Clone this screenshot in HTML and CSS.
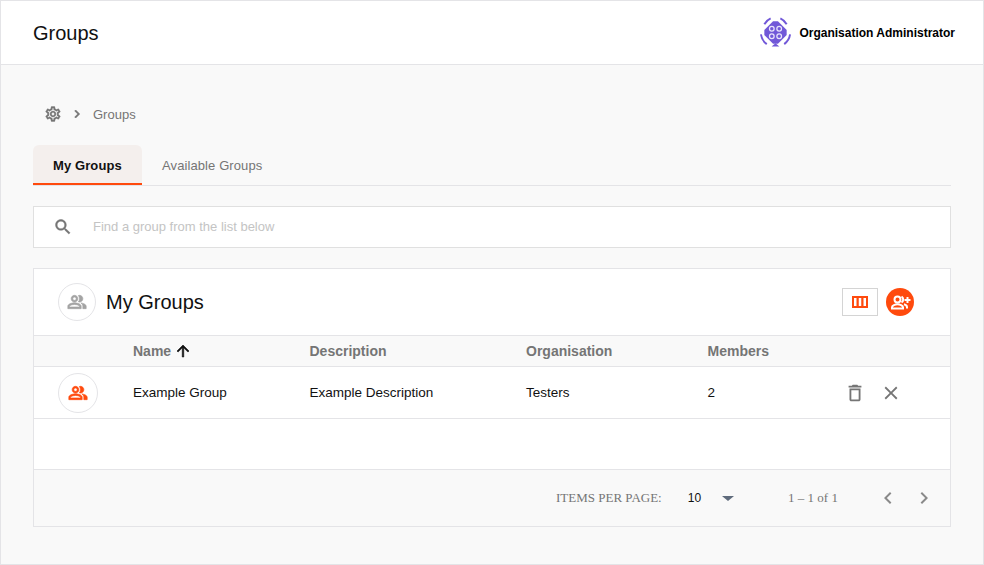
FILE: index.html
```html
<!DOCTYPE html>
<html>
<head>
<title>Groups</title>
<link rel="stylesheet" href="styles.css">
</head>
<body>

<div class="app">
  <header class="topbar">
    <h1 class="page-title">Groups</h1>
    <div class="user">
      <svg class="logo" viewBox="0 0 34 34" width="33" height="33">
        <g fill="none" stroke="#7158d8" stroke-width="2">
          <path d="M5.500 8.500 A14.500 14.500 0 0 1 12 2.500"/>
          <path d="M22 2.500 A14.500 14.500 0 0 1 28.500 8.500"/>
          <path d="M32 19 A15 15 0 0 1 26 29"/>
          <path d="M8 29 A15 15 0 0 1 2 19"/>
        </g>
        <path d="M17 28 L21 31.500 H13 Z" fill="#7158d8"/>
        <path d="M14.500 5.500 H19.500 L28.500 14.500 V19.500 L19.500 28.500 H14.500 L5.500 19.500 V14.500 Z" fill="#7158d8"/>
        <g fill="#7158d8" stroke="#e9e4fb" stroke-width="1.300">
          <circle cx="13.200" cy="13.200" r="2.400"/>
          <circle cx="20.800" cy="13.200" r="2.400"/>
          <circle cx="13.200" cy="20.800" r="2.400"/>
          <circle cx="20.800" cy="20.800" r="2.400"/>
        </g>
      </svg>
      <span class="user-name">Organisation Administrator</span>
    </div>
  </header>

  <main class="content">
    <nav class="crumbs">
      <svg class="crumb-gear" viewBox="0 0 24 24" width="18" height="18"><path fill="#757575" stroke="#757575" stroke-width="0.5" d="M19.43 12.98c.04-.32.07-.64.07-.98s-.03-.66-.07-.98l2.11-1.65c.19-.15.24-.42.12-.64l-2-3.46c-.12-.22-.39-.3-.61-.22l-2.49 1c-.52-.4-1.08-.73-1.69-.98l-.38-2.65C14.46 2.18 14.25 2 14 2h-4c-.25 0-.46.18-.49.42l-.38 2.65c-.61.25-1.17.59-1.69.98l-2.49-1c-.23-.09-.49 0-.61.22l-2 3.46c-.13.22-.07.49.12.64l2.11 1.65c-.04.32-.07.65-.07.98s.03.66.07.98l-2.11 1.65c-.19.15-.24.42-.12.64l2 3.46c.12.22.39.3.61.22l2.49-1c.52.4 1.08.73 1.69.98l.38 2.65c.03.24.24.42.49.42h4c.25 0 .46-.18.49-.42l.38-2.65c.61-.25 1.17-.59 1.69-.98l2.49 1c.23.09.49 0 .61-.22l2-3.46c.12-.22.07-.49-.12-.64l-2.11-1.65zM17.45 11.27c.04.31.05.52.05.73s-.02.43-.05.73l-.14 1.13.89.7 1.08.84-.7 1.21-1.27-.51-1.04-.42-.9.68c-.43.32-.84.56-1.25.73l-1.06.43-.16 1.13-.2 1.35h-1.4l-.19-1.35-.16-1.13-1.06-.43c-.43-.18-.83-.41-1.23-.71l-.91-.7-1.06.43-1.27.51-.7-1.21 1.08-.84.89-.7-.14-1.13c-.03-.31-.05-.54-.05-.74s.02-.43.05-.73l.14-1.13-.89-.7-1.08-.84.7-1.21 1.27.51 1.04.42.9-.68c.43-.32.84-.56 1.25-.73l1.06-.43.16-1.13.2-1.35h1.39l.19 1.35.16 1.13 1.06.43c.43.18.83.41 1.23.71l.91.7 1.06-.43 1.27-.51.7 1.21-1.07.85-.89.7.14 1.13zM12 8c-2.21 0-4 1.79-4 4s1.79 4 4 4 4-1.79 4-4-1.79-4-4-4zm0 6c-1.1 0-2-.9-2-2s.9-2 2-2 2 .9 2 2-.9 2-2 2z"/></svg>
      <svg class="crumb-sep" viewBox="0 0 24 24" width="16" height="16"><path fill="#757575" stroke="#757575" stroke-width="1" d="M10 6 8.590 7.410 13.170 12l-4.580 4.590L10 18l6-6z"/></svg>
      <span class="crumb-text">Groups</span>
    </nav>

    <div class="tabs">
      <div class="tab active">My Groups</div>
      <div class="tab">Available Groups</div>
    </div>

    <div class="search">
      <svg viewBox="0 0 24 24" width="20" height="20"><path fill="#757575" stroke="#757575" stroke-width="0.5" d="M15.500 14h-.79l-.28-.27C15.410 12.590 16 11.110 16 9.500 16 5.910 13.090 3 9.500 3S3 5.910 3 9.500 5.910 16 9.500 16c1.610 0 3.090-.59 4.230-1.570l.27.28v.79l5 4.990L20.490 19l-4.990-5zm-6 0C7.010 14 5 11.990 5 9.500S7.010 5 9.500 5 14 7.010 14 9.500 11.990 14 9.500 14z"/></svg>
      <span class="search-text">Find a group from the list below</span>
    </div>

    <section class="card">
      <div class="card-head">
        <div class="circle small">
          <svg viewBox="0 0 24 24" width="20" height="20"><path fill="#a3a3a3" stroke="#a3a3a3" stroke-width="0.8" d="M16.670 13.130C18.040 14.060 19 15.320 19 17v3h4v-3c0-2.180-3.570-3.470-6.330-3.870zM15 12c2.210 0 4-1.790 4-4s-1.790-4-4-4c-.47 0-.91.1-1.330.24C14.500 5.270 15 6.580 15 8s-.5 2.730-1.330 3.760c.42.14.86.24 1.330.24zM9 12c2.210 0 4-1.790 4-4s-1.790-4-4-4-4 1.790-4 4 1.790 4 4 4zm0-6c1.100 0 2 .9 2 2s-.9 2-2 2-2-.9-2-2 .9-2 2-2zM9 13c-2.670 0-8 1.340-8 4v3h16v-3c0-2.660-5.330-4-8-4zm6 5H3v-1c0-.8 3.130-2 6-2s6 1.200 6 2v1z"/></svg>
        </div>
        <h2 class="card-title">My Groups</h2>
        <div class="card-actions">
          <button class="columns-btn">
            <svg viewBox="0 0 16 12" width="16" height="12"><path fill="#ff4a0d" fill-rule="evenodd" d="M0 0h16v12H0zM2 2v8h2.500V2zm4.750 0v8h2.500V2zm4.750 0v8H14V2z"/></svg>
          </button>
          <button class="add-btn">
            <svg viewBox="0 0 28 28" width="28" height="28">
              <g fill="none" stroke="#fff" stroke-width="2">
                <circle cx="11.500" cy="11.500" r="3"/>
                <path d="M6 20.500v-1.200c0-1.800 3.300-3 5.500-3s5.500 1.200 5.500 3v1.200z"/>
                <path d="M15.500 8.500a3.500 3.500 0 0 1 0 6"/>
                <path d="M18 16.200c1.800.5 3 1.500 3 3v1.300"/>
                <path d="M21.500 9v6M18.500 12h6"/>
              </g>
            </svg>
          </button>
        </div>
      </div>

      <div class="row head-row">
        <div class="cell col-icon"></div>
        <div class="cell col-name">Name <span class="sort-arrow"><svg viewBox="0 0 24 24" width="18" height="18"><path fill="#111" stroke="#111" stroke-width="0.8" d="M4 12l1.410 1.410L11 7.830V20h2V7.830l5.580 5.590L20 12l-8-8z"/></svg></span></div>
        <div class="cell col-desc">Description</div>
        <div class="cell col-org">Organisation</div>
        <div class="cell col-members">Members</div>
      </div>

      <div class="row body-row">
        <div class="cell col-icon">
          <div class="circle">
            <svg viewBox="0 0 24 24" width="20" height="20"><path fill="#ff4a0d" stroke="#ff4a0d" stroke-width="0.8" d="M16.670 13.130C18.040 14.060 19 15.320 19 17v3h4v-3c0-2.180-3.570-3.470-6.330-3.870zM15 12c2.210 0 4-1.790 4-4s-1.790-4-4-4c-.47 0-.91.1-1.330.24C14.500 5.270 15 6.580 15 8s-.5 2.730-1.330 3.760c.42.14.86.24 1.330.24zM9 12c2.210 0 4-1.790 4-4s-1.790-4-4-4-4 1.790-4 4 1.790 4 4 4zm0-6c1.100 0 2 .9 2 2s-.9 2-2 2-2-.9-2-2 .9-2 2-2zM9 13c-2.670 0-8 1.340-8 4v3h16v-3c0-2.660-5.330-4-8-4zm6 5H3v-1c0-.8 3.130-2 6-2s6 1.200 6 2v1z"/></svg>
          </div>
        </div>
        <div class="cell col-name">Example Group</div>
        <div class="cell col-desc">Example Description</div>
        <div class="cell col-org">Testers</div>
        <div class="cell col-members">2</div>
        <div class="cell col-actions">
          <svg viewBox="0 0 24 24" width="22" height="22"><path fill="#757575" d="M6 19c0 1.100.9 2 2 2h8c1.100 0 2-.9 2-2V7H6v12zM8 9h8v10H8V9zm7.500-5-1-1h-5l-1 1H5v2h14V4z"/></svg>
          <svg viewBox="0 0 24 24" width="22" height="22"><path fill="#757575" d="M19 6.410 17.590 5 12 10.590 6.410 5 5 6.410 10.590 12 5 17.590 6.410 19 12 13.410 17.590 19 19 17.590 13.410 12z"/></svg>
        </div>
      </div>

      <div class="empty-row"></div>

      <div class="pager">
        <span class="pager-label">ITEMS PER PAGE:</span>
        <span class="pager-size">10</span>
        <span class="pager-caret"></span>
        <span class="pager-range">1 – 1 of 1</span>
        <svg class="pager-prev" viewBox="0 0 24 24" width="24" height="24"><path fill="#8a8a8a" d="M15.410 7.410 14 6l-6 6 6 6 1.410-1.410L10.830 12z"/></svg>
        <svg class="pager-next" viewBox="0 0 24 24" width="24" height="24"><path fill="#8a8a8a" d="M10 6 8.590 7.410 13.170 12l-4.580 4.590L10 18l6-6z"/></svg>
      </div>
    </section>
  </main>
</div>

</body>
</html>
```

FILE: styles.css
```css
* {
  box-sizing: border-box;
}

body {
  margin: 0;
  font-family: "Liberation Sans", Arial, sans-serif;
  color: #111;
  background-color: #f9f9f9;
}

.app {
  width: 984px;
  height: 565px;
  border: 1px solid #e4e4e7;
  overflow: hidden;
}

.topbar {
  display: flex;
  align-items: center;
  justify-content: space-between;
  height: 64px;
  padding: 0 28px 0 32px;
  background-color: #fff;
  border-bottom: 1px solid #e4e4e7;
}

.page-title {
  margin: 0;
  padding-top: 1px;
  font-size: 20px;
  font-weight: 400;
}

.user {
  display: flex;
  align-items: center;
  gap: 7px;
}

.user-name {
  font-size: 12px;
  font-weight: 700;
  color: #000;
}

.content {
  padding: 41px 32px 0;
}

.crumbs {
  display: flex;
  align-items: center;
  height: 16px;
  padding-left: 11px;
  font-size: 13px;
  color: #757575;
}

.crumb-sep {
  margin-left: 7px;
  margin-right: 8px;
}

.tabs {
  display: flex;
  margin-top: 23px;
  height: 41px;
  border-bottom: 1px solid #e4e4e7;
}

.tab {
  display: flex;
  align-items: center;
  padding: 0 20px;
  font-size: 13px;
  letter-spacing: 0.1px;
  color: #757575;
}

.tab.active {
  width: 109px;
  padding-top: 2px;
  font-weight: 700;
  color: #111;
  background-color: #f4efed;
  border-bottom: 2px solid #ff4a0d;
  border-radius: 6px 6px 0 0;
}

.search {
  display: flex;
  align-items: center;
  gap: 20px;
  height: 42px;
  margin-top: 20px;
  padding-left: 19px;
  background-color: #fff;
  border: 1px solid #e0e0e0;
}

.search-text {
  margin-bottom: 2px;
  font-size: 13px;
  color: #c4c4c4;
}

.card {
  margin-top: 20px;
  background-color: #fff;
  border: 1px solid #e4e4e7;
}

.card-head {
  display: flex;
  align-items: center;
  height: 66px;
  padding: 0 36px 0 24px;
}

.circle {
  display: flex;
  align-items: center;
  justify-content: center;
  width: 40px;
  height: 40px;
  border: 1px solid #e4e4e7;
  border-radius: 50%;
}

.circle.small {
  width: 38px;
  height: 38px;
}

.card-title {
  margin: 0 0 0 10px;
  font-size: 20px;
  font-weight: 400;
}

.card-actions {
  display: flex;
  align-items: center;
  gap: 8px;
  margin-left: auto;
}

.columns-btn {
  display: flex;
  align-items: center;
  justify-content: center;
  width: 36px;
  height: 28px;
  padding: 0;
  background-color: #fff;
  border: 1px solid #d4d4d4;
}

.add-btn {
  display: flex;
  align-items: center;
  justify-content: center;
  width: 28px;
  height: 28px;
  padding: 0;
  background-color: #ff4a0d;
  border: none;
  border-radius: 50%;
}

.row {
  display: flex;
  align-items: center;
  border-top: 1px solid #e4e4e7;
  font-size: 13.5px;
}

.head-row {
  height: 32px;
  margin-bottom: -1px;
  font-size: 14px;
  font-weight: 700;
  color: #757575;
  background-color: #f9f9f9;
  border-bottom: 1px solid #e4e4e7;
}

.body-row {
  height: 53px;
  border-bottom: 1px solid #e4e4e7;
}

.head-row .col-name {
  display: flex;
  align-items: center;
  gap: 3px;
}

.sort-arrow {
  display: flex;
}

.cell {
  flex: none;
}

.col-icon {
  width: 99px;
  padding-left: 24px;
}

.col-name {
  width: 176.5px;
}

.col-desc {
  width: 216.5px;
}

.col-org {
  width: 181.5px;
}

.col-members {
  width: 132px;
}

.col-actions {
  display: flex;
  gap: 14px;
  padding-left: 4px;
}

.empty-row {
  height: 51px;
  border-bottom: 1px solid #e4e4e7;
}

.pager {
  display: flex;
  align-items: center;
  height: 56px;
  padding-left: 522px;
  background-color: #f9f9f9;
  font-family: "Liberation Serif", serif;
  font-size: 13px;
  color: #757575;
}

.pager-size {
  margin-left: 26px;
  font-family: "Liberation Sans", Arial, sans-serif;
  font-size: 12px;
  color: #111;
}

.pager-caret {
  margin-left: 21px;
  border-left: 6px solid transparent;
  border-right: 6px solid transparent;
  border-top: 5px solid #5f6b7c;
}

.pager-range {
  margin-left: 54px;
}

.pager-prev {
  margin-left: 38px;
}

.pager-next {
  margin-left: 12px;
}
```
